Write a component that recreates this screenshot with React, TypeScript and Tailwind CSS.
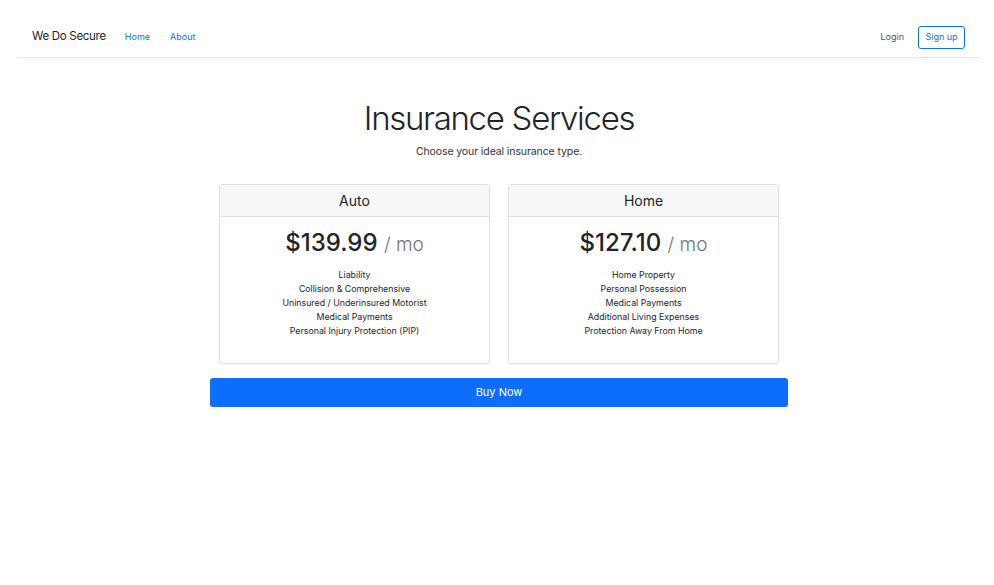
import { Fragment } from 'react';

const plans = [
  {
    name: 'Auto',
    price: '$139.99',
    items: ['Liability', 'Collision & Comprehensive', 'Uninsured / Underinsured Motorist', 'Medical Payments', 'Personal Injury Protection (PIP)'],
  },
  {
    name: 'Home',
    price: '$127.10',
    items: ['Home Property', 'Personal Possession', 'Medical Payments', 'Additional Living Expenses', 'Protection Away From Home'],
  },
];

export default function App() {
  return (
    <div className="min-h-[585px] bg-white text-[#212529]" style={{ fontFamily: 'Inter, "Liberation Sans", sans-serif' }}>
      <div className="ml-[17px] mr-[14px]">
        <nav className="flex items-center h-[58px] pt-[17px] pl-[15px] pr-[15px] border-b border-[#e5e5e5] shadow-[0_1px_2px_rgba(0,0,0,0.04)]">
          <span className="text-[11.5px] text-[#212529] tracking-[-0.3px] mr-[19px]">We Do Secure</span>
          <a className="text-[9px] text-[#0d6efd] mr-[20px]">Home</a>
          <a className="text-[9px] text-[#0d6efd]">About</a>
          <div className="ml-auto flex items-center">
            <a className="text-[9px] text-[#555] mr-[14px]">Login</a>
            <button className="h-[23px] w-[47px] text-[9px] text-[#0d6efd] border border-[#0d6efd] rounded-[3px]">Sign up</button>
          </div>
        </nav>
      </div>

      <div className="w-[582px] pl-[4px] mx-auto">
        <div className="text-center pt-[40px]">
          <h1 className="text-[33px] font-light leading-[40px] tracking-[-1.3px]">Insurance Services</h1>
          <p className="text-[10.5px] mt-[6px] text-[#333] tracking-[-0.1px]">Choose your ideal insurance type.</p>
        </div>

        <div className="flex gap-[18px] px-[9px] mt-[24px]">
          {plans.map(p => (
            <div key={p.name} className="flex-1 border border-[#dfdfdf] rounded-[3px] shadow-[0_1px_2px_rgba(0,0,0,0.06)] h-[180px]">
              <div className="h-[32px] bg-[#f7f7f7] border-b border-[#dfdfdf] flex items-center justify-center text-[14px]">{p.name}</div>
              <div className="text-center pt-[9px]">
                <div className="text-[24px] leading-[34px] font-medium">
                  {p.price} <span className="text-[#6c757d] font-light text-[19px]">/ mo</span>
                </div>
                <ul className="mt-[6px] text-[8.8px] leading-[14px] text-[#212529]">
                  {p.items.map(i => (
                    <Fragment key={i}>
                      <li>{i}</li>
                    </Fragment>
                  ))}
                </ul>
              </div>
            </div>
          ))}
        </div>

        <button className="w-full mt-[14px] h-[29px] rounded-[3px] bg-[#0d6efd] text-white text-[11px]">Buy Now</button>
      </div>
    </div>
  );
}
